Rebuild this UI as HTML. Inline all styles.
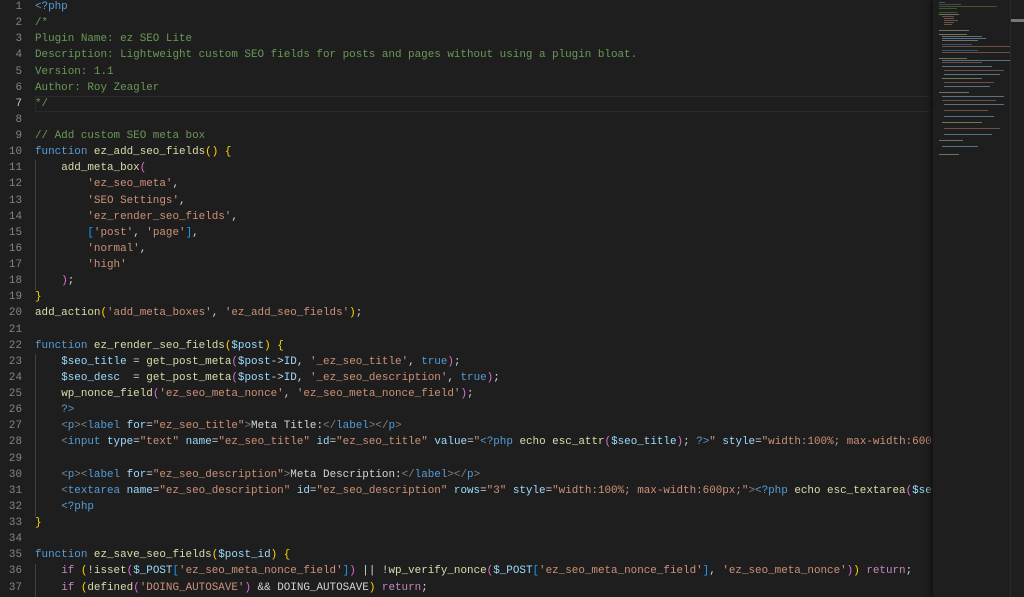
<!DOCTYPE html>
<html><head><meta charset="utf-8"><style>
*{margin:0;padding:0}
body{width:1024px;height:597px;background:#1e1e1e;overflow:hidden;position:relative;font-family:"Liberation Mono",monospace;font-size:10.92px}
#nums{position:absolute;left:0;top:-1px;width:22px;text-align:right;color:#858585}
#code{position:absolute;left:35px;top:-1px;width:898px;overflow:hidden;color:#d4d4d4;white-space:pre}
.l{height:16.14px;line-height:16.14px}
#nums .a{color:#c6c6c6}
.cur{position:absolute;left:35px;top:96px;width:897px;height:14px;border:1px solid #2a2a2a}
.g{position:absolute;width:1px;background:#404040;left:35px}
.c{color:#6a9955}.k{color:#569cd6}.f{color:#dcdcaa}.v{color:#9cdcfe}.s{color:#ce9178}
.y{color:#ffd700}.p{color:#da70d6}.b{color:#179fff}.r{color:#c586c0}.t{color:#808080}
#mm{position:absolute;left:933px;top:0;width:77px;height:597px;background:#1e1e1e;box-shadow:-3px 0 5px #111}
#sb{position:absolute;left:1010px;top:0;width:14px;height:597px;background:#1e1e1e;border-left:1px solid #2a2a2a}
#sl{position:absolute;left:1011px;top:19px;width:13px;height:3px;background:#777}
.m{position:absolute;height:1px;opacity:.45}
</style></head><body>
<div class="cur"></div>
<div class="g" style="top:160px;height:130px"></div>
<div class="g" style="top:354px;height:162px"></div>
<div class="g" style="top:564px;height:33px"></div>
<div id="nums"><div class="l">1</div><div class="l">2</div><div class="l">3</div><div class="l">4</div><div class="l">5</div><div class="l">6</div><div class="l a">7</div><div class="l">8</div><div class="l">9</div><div class="l">10</div><div class="l">11</div><div class="l">12</div><div class="l">13</div><div class="l">14</div><div class="l">15</div><div class="l">16</div><div class="l">17</div><div class="l">18</div><div class="l">19</div><div class="l">20</div><div class="l">21</div><div class="l">22</div><div class="l">23</div><div class="l">24</div><div class="l">25</div><div class="l">26</div><div class="l">27</div><div class="l">28</div><div class="l">29</div><div class="l">30</div><div class="l">31</div><div class="l">32</div><div class="l">33</div><div class="l">34</div><div class="l">35</div><div class="l">36</div><div class="l">37</div></div>
<div id="code"><div class="l k">&lt;?php</div><div class="l c">/*</div><div class="l c">Plugin Name: ez SEO Lite</div><div class="l c">Description: Lightweight custom SEO fields for posts and pages without using a plugin bloat.</div><div class="l c">Version: 1.1</div><div class="l c">Author: Roy Zeagler</div><div class="l c">*/</div><div class="l"> </div><div class="l c">// Add custom SEO meta box</div><div class="l"><span class="k">function</span> <span class="f">ez_add_seo_fields</span><span class="y">()</span> <span class="y">{</span></div><div class="l">    <span class="f">add_meta_box</span><span class="p">(</span></div><div class="l">        <span class="s">'ez_seo_meta'</span>,</div><div class="l">        <span class="s">'SEO Settings'</span>,</div><div class="l">        <span class="s">'ez_render_seo_fields'</span>,</div><div class="l">        <span class="b">[</span><span class="s">'post'</span>, <span class="s">'page'</span><span class="b">]</span>,</div><div class="l">        <span class="s">'normal'</span>,</div><div class="l">        <span class="s">'high'</span></div><div class="l">    <span class="p">)</span>;</div><div class="l"><span class="y">}</span></div><div class="l"><span class="f">add_action</span><span class="y">(</span><span class="s">'add_meta_boxes'</span>, <span class="s">'ez_add_seo_fields'</span><span class="y">)</span>;</div><div class="l"> </div><div class="l"><span class="k">function</span> <span class="f">ez_render_seo_fields</span><span class="y">(</span><span class="v">$post</span><span class="y">)</span> <span class="y">{</span></div><div class="l">    <span class="v">$seo_title</span> = <span class="f">get_post_meta</span><span class="p">(</span><span class="v">$post</span>-&gt;<span class="v">ID</span>, <span class="s">'_ez_seo_title'</span>, <span class="k">true</span><span class="p">)</span>;</div><div class="l">    <span class="v">$seo_desc</span>  = <span class="f">get_post_meta</span><span class="p">(</span><span class="v">$post</span>-&gt;<span class="v">ID</span>, <span class="s">'_ez_seo_description'</span>, <span class="k">true</span><span class="p">)</span>;</div><div class="l">    <span class="f">wp_nonce_field</span><span class="p">(</span><span class="s">'ez_seo_meta_nonce'</span>, <span class="s">'ez_seo_meta_nonce_field'</span><span class="p">)</span>;</div><div class="l">    <span class="k">?&gt;</span></div><div class="l">    <span class="t">&lt;</span><span class="k">p</span><span class="t">&gt;&lt;</span><span class="k">label</span> <span class="v">for</span>=<span class="s">"ez_seo_title"</span><span class="t">&gt;</span>Meta Title:<span class="t">&lt;/</span><span class="k">label</span><span class="t">&gt;&lt;/</span><span class="k">p</span><span class="t">&gt;</span></div><div class="l">    <span class="t">&lt;</span><span class="k">input</span> <span class="v">type</span>=<span class="s">"text"</span> <span class="v">name</span>=<span class="s">"ez_seo_title"</span> <span class="v">id</span>=<span class="s">"ez_seo_title"</span> <span class="v">value</span>=<span class="s">"</span><span class="k">&lt;?php</span> <span class="f">echo</span> <span class="f">esc_attr</span><span class="p">(</span><span class="v">$seo_title</span><span class="p">)</span>; <span class="k">?&gt;</span><span class="s">"</span> <span class="v">style</span>=<span class="s">"width:100%; max-width:600px;"</span></div><div class="l"> </div><div class="l">    <span class="t">&lt;</span><span class="k">p</span><span class="t">&gt;&lt;</span><span class="k">label</span> <span class="v">for</span>=<span class="s">"ez_seo_description"</span><span class="t">&gt;</span>Meta Description:<span class="t">&lt;/</span><span class="k">label</span><span class="t">&gt;&lt;/</span><span class="k">p</span><span class="t">&gt;</span></div><div class="l">    <span class="t">&lt;</span><span class="k">textarea</span> <span class="v">name</span>=<span class="s">"ez_seo_description"</span> <span class="v">id</span>=<span class="s">"ez_seo_description"</span> <span class="v">rows</span>=<span class="s">"3"</span> <span class="v">style</span>=<span class="s">"width:100%; max-width:600px;"</span><span class="t">&gt;</span><span class="k">&lt;?php</span> <span class="f">echo</span> <span class="f">esc_textarea</span><span class="p">(</span><span class="v">$seo_desc</span><span class="p">)</span>;</div><div class="l">    <span class="k">&lt;?php</span></div><div class="l"><span class="y">}</span></div><div class="l"> </div><div class="l"><span class="k">function</span> <span class="f">ez_save_seo_fields</span><span class="y">(</span><span class="v">$post_id</span><span class="y">)</span> <span class="y">{</span></div><div class="l">    <span class="r">if</span> <span class="y">(</span>!<span class="f">isset</span><span class="p">(</span><span class="v">$_POST</span><span class="b">[</span><span class="s">'ez_seo_meta_nonce_field'</span><span class="b">]</span><span class="p">)</span> || !<span class="f">wp_verify_nonce</span><span class="p">(</span><span class="v">$_POST</span><span class="b">[</span><span class="s">'ez_seo_meta_nonce_field'</span><span class="b">]</span>, <span class="s">'ez_seo_meta_nonce'</span><span class="p">)</span><span class="y">)</span> <span class="r">return</span>;</div><div class="l">    <span class="r">if</span> <span class="y">(</span><span class="f">defined</span><span class="p">(</span><span class="s">'DOING_AUTOSAVE'</span><span class="p">)</span> &amp;&amp; DOING_AUTOSAVE<span class="y">)</span> <span class="r">return</span>;</div></div>
<div id="mm">
<div class="m" style="left:6px;top:2px;width:6px;background:#569cd6"></div>
<div class="m" style="left:6px;top:4px;width:22px;background:#6a9955"></div>
<div class="m" style="left:6px;top:6px;width:58px;background:#6a9955"></div>
<div class="m" style="left:6px;top:8px;width:18px;background:#6a9955"></div>
<div class="m" style="left:6px;top:12px;width:18px;background:#6a9955"></div>
<div class="m" style="left:6px;top:14px;width:20px;background:#dcdcaa"></div>
<div class="m" style="left:9px;top:16px;width:12px;background:#ce9178"></div>
<div class="m" style="left:11px;top:18px;width:10px;background:#ce9178"></div>
<div class="m" style="left:11px;top:20px;width:14px;background:#ce9178"></div>
<div class="m" style="left:11px;top:22px;width:10px;background:#ce9178"></div>
<div class="m" style="left:11px;top:24px;width:8px;background:#ce9178"></div>
<div class="m" style="left:6px;top:30px;width:30px;background:#dcdcaa"></div>
<div class="m" style="left:6px;top:34px;width:28px;background:#dcdcaa"></div>
<div class="m" style="left:9px;top:36px;width:40px;background:#9cdcfe"></div>
<div class="m" style="left:9px;top:38px;width:44px;background:#9cdcfe"></div>
<div class="m" style="left:9px;top:40px;width:36px;background:#dcdcaa"></div>
<div class="m" style="left:9px;top:44px;width:30px;background:#569cd6"></div>
<div class="m" style="left:9px;top:46px;width:68px;background:#ce9178"></div>
<div class="m" style="left:9px;top:50px;width:36px;background:#569cd6"></div>
<div class="m" style="left:9px;top:52px;width:68px;background:#ce9178"></div>
<div class="m" style="left:6px;top:58px;width:28px;background:#dcdcaa"></div>
<div class="m" style="left:9px;top:60px;width:68px;background:#9cdcfe"></div>
<div class="m" style="left:9px;top:62px;width:40px;background:#ce9178"></div>
<div class="m" style="left:9px;top:66px;width:50px;background:#9cdcfe"></div>
<div class="m" style="left:11px;top:70px;width:60px;background:#ce9178"></div>
<div class="m" style="left:11px;top:74px;width:56px;background:#9cdcfe"></div>
<div class="m" style="left:9px;top:78px;width:40px;background:#dcdcaa"></div>
<div class="m" style="left:11px;top:82px;width:50px;background:#ce9178"></div>
<div class="m" style="left:11px;top:86px;width:46px;background:#9cdcfe"></div>
<div class="m" style="left:6px;top:92px;width:30px;background:#dcdcaa"></div>
<div class="m" style="left:9px;top:96px;width:62px;background:#9cdcfe"></div>
<div class="m" style="left:9px;top:100px;width:54px;background:#ce9178"></div>
<div class="m" style="left:11px;top:104px;width:60px;background:#9cdcfe"></div>
<div class="m" style="left:11px;top:110px;width:44px;background:#ce9178"></div>
<div class="m" style="left:11px;top:116px;width:50px;background:#9cdcfe"></div>
<div class="m" style="left:9px;top:122px;width:40px;background:#dcdcaa"></div>
<div class="m" style="left:11px;top:128px;width:56px;background:#ce9178"></div>
<div class="m" style="left:11px;top:134px;width:48px;background:#9cdcfe"></div>
<div class="m" style="left:6px;top:140px;width:24px;background:#dcdcaa"></div>
<div class="m" style="left:9px;top:146px;width:36px;background:#9cdcfe"></div>
<div class="m" style="left:6px;top:154px;width:20px;background:#dcdcaa"></div>
</div>
<div id="sb"></div><div id="sl"></div>
</body></html>
